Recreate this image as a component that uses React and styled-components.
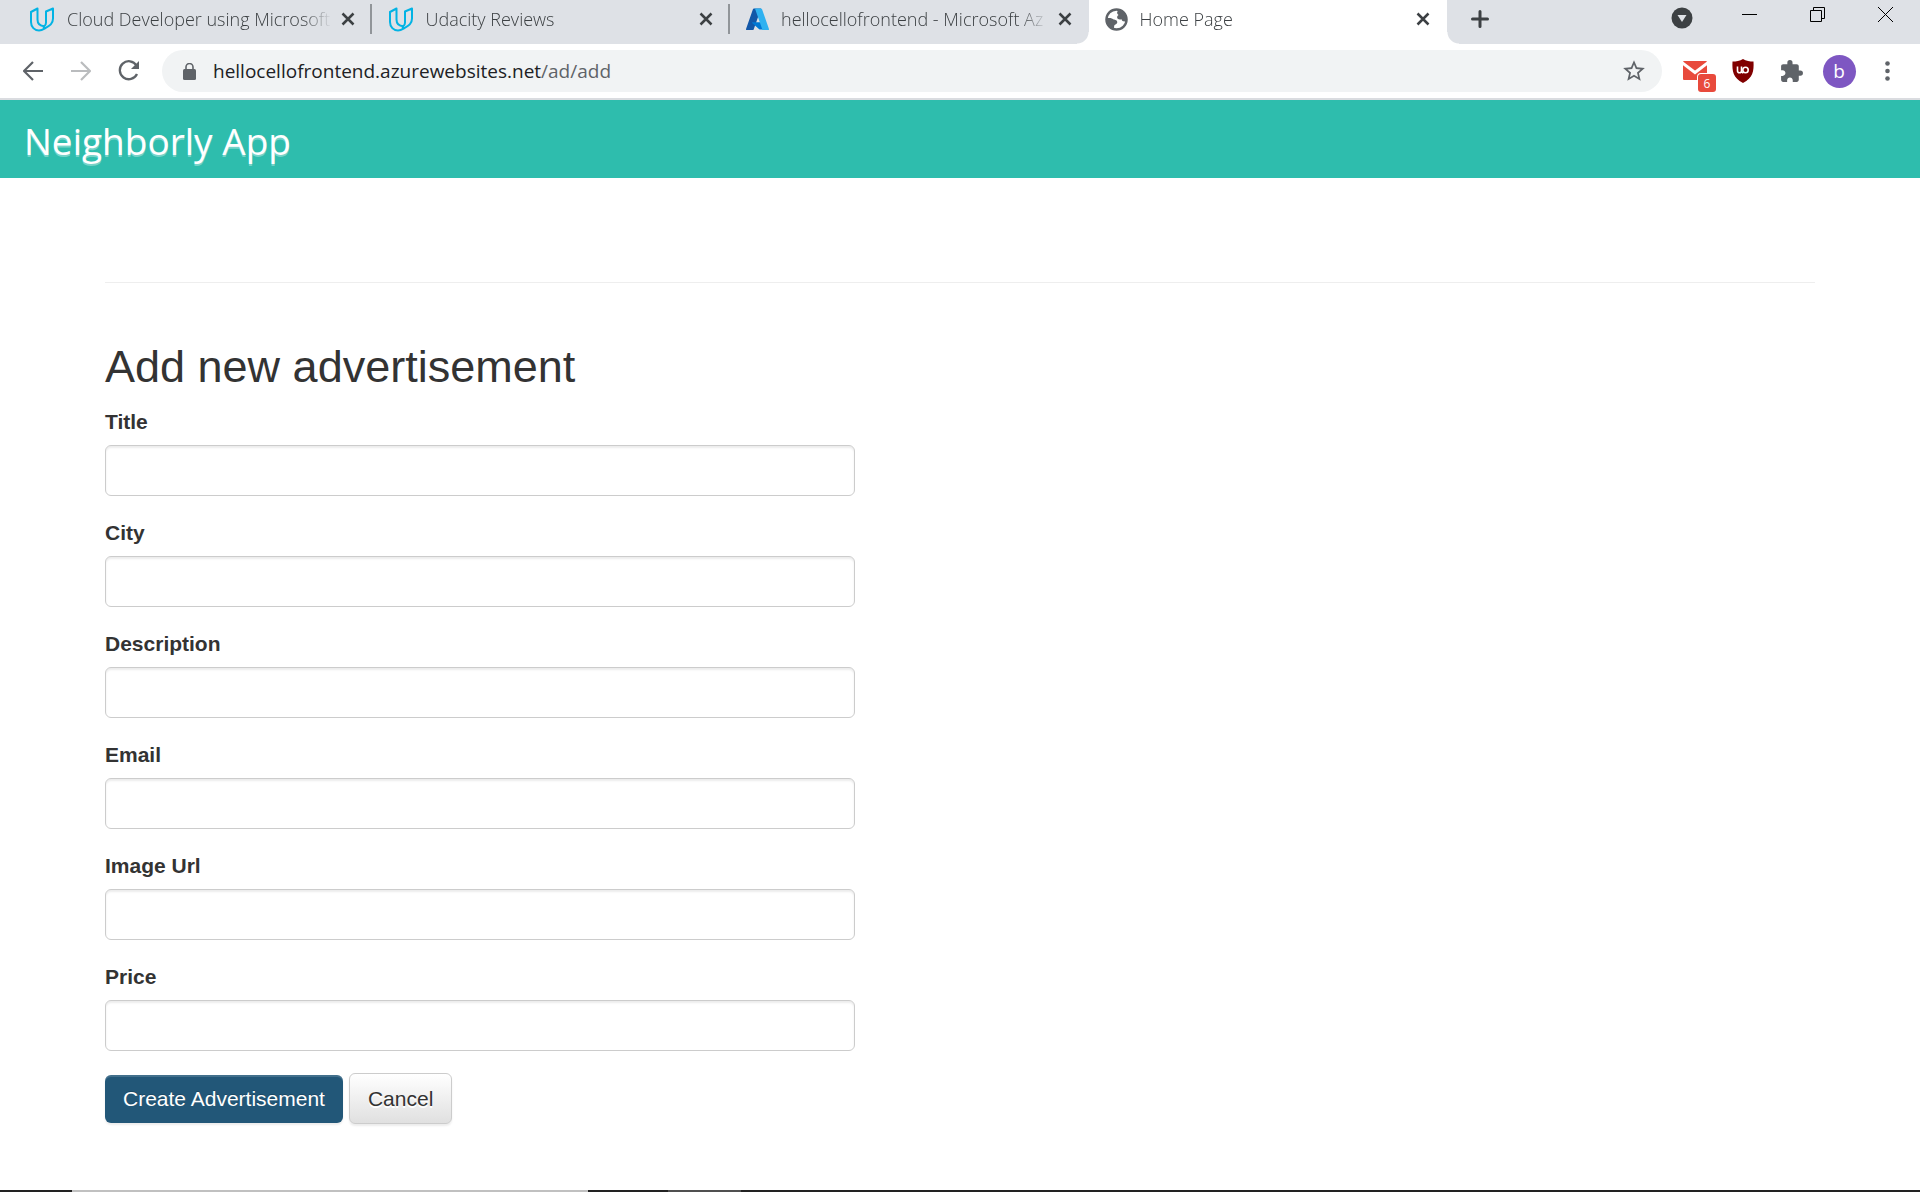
import React from "react";
import styled, { createGlobalStyle, css } from "styled-components";

const GlobalStyle = createGlobalStyle`
  *, *::before, *::after { box-sizing: border-box; }
  body { margin: 0; background: #fff; }
  button { font: inherit; cursor: pointer; }
`;

const uiFont = `"Open Sans", "Noto Sans", sans-serif`;
const pageFont = `"Liberation Sans", Arial, sans-serif`;

const Screen = styled.div`
  display: flex;
  flex-direction: column;
  min-height: 100vh;
`;

/* Browser frame */

const TabStrip = styled.div`
  display: flex;
  height: 44px;
  padding-left: 13px;
  background: #dee1e6;
  font-family: ${uiFont};
`;

const Tabs = styled.div`
  display: flex;
  flex: 0 1 1434px;
  min-width: 0;
`;

const Tab = styled.div`
  position: relative;
  display: flex;
  align-items: center;
  flex: 1 1 0;
  min-width: 0;
  padding: 0 12px 6px 16px;
  ${(p) =>
    p.$divided &&
    css`
      &::after {
        content: "";
        position: absolute;
        top: 4px;
        right: 0;
        width: 2px;
        height: 30px;
        background: #919599;
      }
    `}
  ${(p) =>
    p.$active &&
    css`
      background: #fff;
      &::before,
      &::after {
        content: "";
        position: absolute;
        bottom: 0;
        width: 12px;
        height: 12px;
      }
      &::before {
        right: 100%;
        background: radial-gradient(circle at 0 0, transparent 11px, #fff 12px);
      }
      &::after {
        left: 100%;
        background: radial-gradient(circle at 100% 0, transparent 11px, #fff 12px);
      }
    `}
`;

const TabTitle = styled.button`
  flex: 1;
  min-width: 0;
  margin-left: 12px;
  padding: 0;
  border: 0;
  background: none;
  color: #3c4043;
  font-size: 18px;
  font-weight: 300;
  line-height: 24px;
  text-align: left;
  white-space: nowrap;
  overflow: hidden;
  mask-image: linear-gradient(to left, transparent 4px, #000 34px);
`;

const IconButton = styled.button`
  display: flex;
  align-items: center;
  justify-content: center;
  flex: none;
  width: ${(p) => p.$width || 48}px;
  height: ${(p) => p.$height || 48}px;
  padding: 0;
  border: 0;
  background: none;
`;

const WindowControls = styled.div`
  display: flex;
  margin-left: auto;
  padding-right: 1px;
`;

const Toolbar = styled.div`
  display: flex;
  align-items: center;
  gap: 9px;
  height: 56px;
  padding: 0 9px;
  border-bottom: 2px solid #dadce0;
  background: #fff;
  font-family: ${uiFont};
`;

const ButtonGroup = styled.div`
  display: flex;
`;

const AddressBar = styled.div`
  display: flex;
  align-items: center;
  flex: 1;
  min-width: 0;
  height: 42px;
  padding: 0 4px 0 3px;
  border-radius: 21px;
  background: #f1f3f4;
`;

const Address = styled.div`
  flex: 1;
  min-width: 0;
  overflow: hidden;
  color: #202124;
  font-size: 19px;
  line-height: 28px;
  white-space: nowrap;
`;

const AddressPath = styled.span`
  color: #5f6368;
`;

const MailBadge = styled.span`
  position: absolute;
  right: 3px;
  bottom: 3px;
  width: 18px;
  height: 18px;
  border-radius: 3px;
  background: #e84a3c;
  box-shadow: 0 0 0 1px #fff;
  color: #fff;
  font-size: 12px;
  line-height: 20px;
`;

const MailButton = styled(IconButton)`
  position: relative;
`;

const Avatar = styled.span`
  width: 33px;
  height: 33px;
  border-radius: 50%;
  background: #7e57c2;
  color: #fff;
  font-size: 19px;
  line-height: 32px;
  text-align: center;
`;

const Taskbar = styled.div`
  display: flex;
  height: 2px;
  background: #222;
`;

const TaskbarItem = styled.span`
  width: ${(p) => p.$width}px;
  background: ${(p) => p.$color};
`;

/* Web page */

const Navbar = styled.header`
  display: flex;
  align-items: flex-end;
  height: 78px;
  padding: 0 24px 10px;
  background: #2ebdad;
`;

const Brand = styled.a`
  color: #fff;
  font-family: ${uiFont};
  font-size: 37px;
  line-height: 54px;
  text-decoration: none;
  text-shadow: 0 2px 0 rgba(255, 255, 255, 0.35);
`;

const Content = styled.main`
  flex: 1;
  padding: 104px 105px 64px;
  color: #333;
  font-family: ${pageFont};
  font-size: 21px;
  line-height: 30px;
`;

const Divider = styled.hr`
  margin: 0 0 59px;
  border: 0;
  border-top: 1px solid #eee;
`;

const Heading = styled.h2`
  margin: 0 0 15px;
  font-size: 45px;
  font-weight: 400;
  line-height: 50px;
`;

const Field = styled.div`
  display: flex;
  flex-direction: column;
  gap: 8px;
  max-width: 750px;
  margin-bottom: 22px;
`;

const Label = styled.label`
  align-self: flex-start;
  font-weight: 700;
`;

const TextInput = styled.input`
  width: 100%;
  height: 51px;
  padding: 9px 18px;
  border: 1px solid #ccc;
  border-radius: 6px;
  background: #fff;
  box-shadow: inset 0 2px 2px rgba(0, 0, 0, 0.075);
  color: #555;
  font: inherit;
`;

const Actions = styled.div`
  display: flex;
  align-items: center;
  gap: 6px;
`;

const Button = styled.button`
  padding: 9px 18px;
  border: 0;
  border-radius: 6px;
  line-height: 30px;
  ${(p) =>
    p.$primary
      ? css`
          background: #225778;
          box-shadow: inset 0 2px 0 rgba(255, 255, 255, 0.15),
            0 2px 2px rgba(0, 0, 0, 0.075);
          color: #fff;
          text-shadow: 0 -1px 0 rgba(0, 0, 0, 0.2);
        `
      : css`
          border: 1px solid #ccc;
          background: linear-gradient(#fff, #e0e0e0);
          box-shadow: 0 2px 2px rgba(0, 0, 0, 0.075);
          color: #333;
          line-height: 31px;
          text-shadow: 0 2px 0 #fff;
        `}
`;

/* Icons */

const UdacityIcon = () => (
  <svg width="26" height="25" viewBox="0 0 25 25" fill="none" stroke="#02b3e4" strokeWidth="2" strokeLinejoin="round">
    <path d="M8 1.500 1.500 5v10c0 5 3.500 8.500 8 8.500 2 0 4-1 6-2.200 4.500-2.500 8-4.300 8-9.800v-10L16.500 4.500v11c0 1.800-.5 3-1.700 3.700C11 19 8 17 8 12.500z" />
    <path d="M14.800 19.200c-1.300 1.300-.5 1.800.7 2.100" />
  </svg>
);

const AzureIcon = () => (
  <svg width="23" height="22" viewBox="0 0 96 96" preserveAspectRatio="none">
    <path fill="#1257a8" d="M33.300 2h29.500L32 93.500a4.700 4.700 0 0 1-4.500 3.200H5a4.700 4.700 0 0 1-4.500-6.200L28.900 5.200A4.700 4.700 0 0 1 33.300 2z" />
    <path fill="#0078d4" d="M71.200 62H27a2 2 0 0 0-1.400 3.500L54 92a4.700 4.700 0 0 0 3 1.300h25z" />
    <path fill="#2fb1f0" d="M67 5.200A4.700 4.700 0 0 0 62.700 2H34a4.700 4.700 0 0 1 4.500 3.200L67 90.500a4.700 4.700 0 0 1-4.500 6.200H91a4.700 4.700 0 0 0 4.500-6.200z" />
  </svg>
);

const GlobeIcon = () => (
  <svg width="23" height="23" viewBox="0 0 24 24">
    <circle cx="12" cy="12" r="10.500" fill="#fff" stroke="#5f6368" strokeWidth="2.500" />
    <path fill="#5f6368" d="M13.500 1.500C18 2 22.900 6 22.900 12c-.5 1.300-1.500 2-2.700 2-1.500 0-2.700-.7-2.900-2.300-1.800.4-4.300.4-4.600-1.500-.2-1.500.3-2.300 1.500-3-1-.6-1.800-1.300-1.500-2.700.2-1 1-1.500.8-3z" />
    <path fill="#5f6368" d="M2 10.500c3.500-.5 6 .3 7 1.500 1.500.2 4 .8 3.800 3-.2 2-2.500 2-3 3-.5 1.300-.3 2.300-.3 3.500C5 20.500 1 17 2 10.500z" />
  </svg>
);

const CloseIcon = () => (
  <svg width="14" height="14" viewBox="0 0 14 14" stroke="#3c4043" strokeWidth="2.500">
    <path d="M1.500 1.500l11 11M12.500 1.500l-11 11" />
  </svg>
);

const PlusIcon = () => (
  <svg width="18" height="18" viewBox="0 0 18 18" stroke="#3c4043" strokeWidth="3" strokeLinecap="round">
    <path d="M9 1.500v15M1.500 9h15" />
  </svg>
);

const TabSearchIcon = () => (
  <svg width="22" height="22" viewBox="0 0 22 22">
    <circle cx="11" cy="11" r="10.500" fill="#3c4043" />
    <path d="M6.500 8h9L11 15z" fill="#dee1e6" />
  </svg>
);

const MinimizeIcon = () => (
  <svg width="15" height="15" stroke="#000" fill="none"><path d="M0 7.500h15" /></svg>
);

const RestoreIcon = () => (
  <svg width="15" height="15" stroke="#000" fill="none">
    <path d="M.5 3.500h11v11H.5zM3.500 3.500v-3h11v11h-3" />
  </svg>
);

const WindowCloseIcon = () => (
  <svg width="15" height="15" stroke="#000" fill="none"><path d="M0 0l15 15M15 0L0 15" /></svg>
);

const ArrowIcon = ({ forward }) => (
  <svg width="20" height="20" viewBox="0 0 20 20" fill="none" stroke={forward ? "#babcbe" : "#5f6368"} strokeWidth="2.200">
    <path d={forward ? "M0 10h18M10 1l9 9-9 9" : "M20 10H2M10 1l-9 9 9 9"} />
  </svg>
);

const ReloadIcon = () => (
  <svg width="22" height="22" viewBox="0 0 22 22" fill="none" stroke="#5f6368" strokeWidth="2.300">
    <path d="M18.500 5.500A9 9 0 1 0 19 14" />
    <path d="M21 1v8h-8z" fill="#5f6368" stroke="none" />
  </svg>
);

const LockIcon = () => (
  <svg width="13" height="17" viewBox="0 0 13 17">
    <rect y="6" width="13" height="11" rx="1.500" fill="#5f6368" />
    <path d="M3 7V4a3.500 3.500 0 0 1 7 0v3" fill="none" stroke="#5f6368" strokeWidth="1.600" />
  </svg>
);

const StarIcon = () => (
  <svg width="26" height="26" viewBox="0 0 24 24" fill="#5f6368">
    <path d="M22 9.240l-7.190-.62L12 2 9.190 8.630 2 9.240l5.460 4.730L5.820 21 12 17.270 18.180 21l-1.630-7.030L22 9.240zM12 15.400l-3.760 2.270 1-4.280-3.320-2.880 4.380-.38L12 6.100l1.710 4.040 4.380.38-3.320 2.880 1 4.280L12 15.400z" />
  </svg>
);

const MailIcon = () => (
  <svg width="24" height="20" viewBox="0 0 24 20">
    <rect width="24" height="19" rx="1" fill="#e84a3c" />
    <path d="M-1 1.500l13 10 13-10" fill="none" stroke="#fff" strokeWidth="3" />
  </svg>
);

const ShieldIcon = () => (
  <svg width="22" height="24" viewBox="0 0 22 24">
    <path d="M11 0c3 2 7 2.500 10.500 2.500C22 12 21 19 11 24 1 19 0 12 .5 2.500 4 2.500 8 2 11 0z" fill="#800000" />
    <path d="M5.500 7.500v4.200a2 2 0 0 0 4 0V7.500v4.200q0 2 1.800 2" fill="none" stroke="#fff" strokeWidth="1.600" />
    <circle cx="13.500" cy="11" r="2.700" fill="none" stroke="#fff" strokeWidth="1.600" />
  </svg>
);

const PuzzleIcon = () => (
  <svg width="25" height="25" viewBox="0 0 24 24" fill="#5f6368">
    <path d="M20.500 11H19V7c0-1.100-.9-2-2-2h-4V3.500a2.500 2.500 0 0 0-5 0V5H4c-1.100 0-1.990.9-1.990 2v3.800H3.500c1.490 0 2.700 1.210 2.700 2.700s-1.210 2.700-2.700 2.700H2V20c0 1.100.9 2 2 2h3.800v-1.500c0-1.490 1.210-2.700 2.700-2.700s2.700 1.210 2.700 2.700V22H17c1.100 0 2-.9 2-2v-4h1.500a2.500 2.500 0 0 0 0-5z" />
  </svg>
);

const DotsIcon = () => (
  <svg width="5" height="20" viewBox="0 0 5 20" fill="#5f6368">
    <circle cx="2.500" cy="2.500" r="2.300" />
    <circle cx="2.500" cy="10" r="2.300" />
    <circle cx="2.500" cy="17.500" r="2.300" />
  </svg>
);

const tabs = [
  { title: "Cloud Developer using Microsoft", icon: <UdacityIcon />, divided: true },
  { title: "Udacity Reviews", icon: <UdacityIcon />, divided: true },
  { title: "hellocellofrontend - Microsoft Az", icon: <AzureIcon /> },
  { title: "Home Page", icon: <GlobeIcon />, active: true },
];

const fields = [
  { id: "title", label: "Title" },
  { id: "city", label: "City" },
  { id: "description", label: "Description" },
  { id: "email", label: "Email" },
  { id: "imageUrl", label: "Image Url" },
  { id: "price", label: "Price" },
];

export default function App() {
  return (
    <Screen>
      <GlobalStyle />
      <TabStrip>
        <Tabs>
          {tabs.map((tab) => (
            <Tab key={tab.title} $active={tab.active} $divided={tab.divided}>
              {tab.icon}
              <TabTitle>{tab.title}</TabTitle>
              <IconButton $width={24} $height={24} aria-label="Close tab">
                <CloseIcon />
              </IconButton>
            </Tab>
          ))}
        </Tabs>
        <IconButton $width={66} $height={38} aria-label="New tab"><PlusIcon /></IconButton>
        <WindowControls>
          <IconButton $width={66} $height={36} aria-label="Search tabs"><TabSearchIcon /></IconButton>
          <IconButton $width={68} $height={29} aria-label="Minimize"><MinimizeIcon /></IconButton>
          <IconButton $width={68} $height={29} aria-label="Restore"><RestoreIcon /></IconButton>
          <IconButton $width={68} $height={29} aria-label="Close"><WindowCloseIcon /></IconButton>
        </WindowControls>
      </TabStrip>
      <Toolbar>
        <ButtonGroup>
          <IconButton aria-label="Back"><ArrowIcon /></IconButton>
          <IconButton aria-label="Forward"><ArrowIcon forward /></IconButton>
          <IconButton aria-label="Reload"><ReloadIcon /></IconButton>
        </ButtonGroup>
        <AddressBar>
          <IconButton $height={40} aria-label="Site information"><LockIcon /></IconButton>
          <Address>
            hellocellofrontend.azurewebsites.net<AddressPath>/ad/add</AddressPath>
          </Address>
          <IconButton $height={40} aria-label="Bookmark this page"><StarIcon /></IconButton>
        </AddressBar>
        <ButtonGroup>
          <MailButton aria-label="Mail">
            <MailIcon />
            <MailBadge>6</MailBadge>
          </MailButton>
          <IconButton aria-label="Content blocker"><ShieldIcon /></IconButton>
          <IconButton aria-label="Extensions"><PuzzleIcon /></IconButton>
          <IconButton aria-label="Profile"><Avatar>b</Avatar></IconButton>
          <IconButton aria-label="Menu"><DotsIcon /></IconButton>
        </ButtonGroup>
      </Toolbar>

      <Navbar>
        <Brand href="#">Neighborly App</Brand>
      </Navbar>
      <Content>
        <Divider />
        <Heading>Add new advertisement</Heading>
        <form onSubmit={(event) => event.preventDefault()}>
          {fields.map((field) => (
            <Field key={field.id}>
              <Label htmlFor={field.id}>{field.label}</Label>
              <TextInput id={field.id} name={field.id} type="text" />
            </Field>
          ))}
          <Actions>
            <Button type="submit" $primary>Create Advertisement</Button>
            <Button type="button">Cancel</Button>
          </Actions>
        </form>
      </Content>

      <Taskbar>
        <TaskbarItem $width={72} $color="#222" />
        <TaskbarItem $width={516} $color="#c0c0c0" />
        <TaskbarItem $width={80} $color="#222" />
        <TaskbarItem $width={73} $color="#505050" />
      </Taskbar>
    </Screen>
  );
}
